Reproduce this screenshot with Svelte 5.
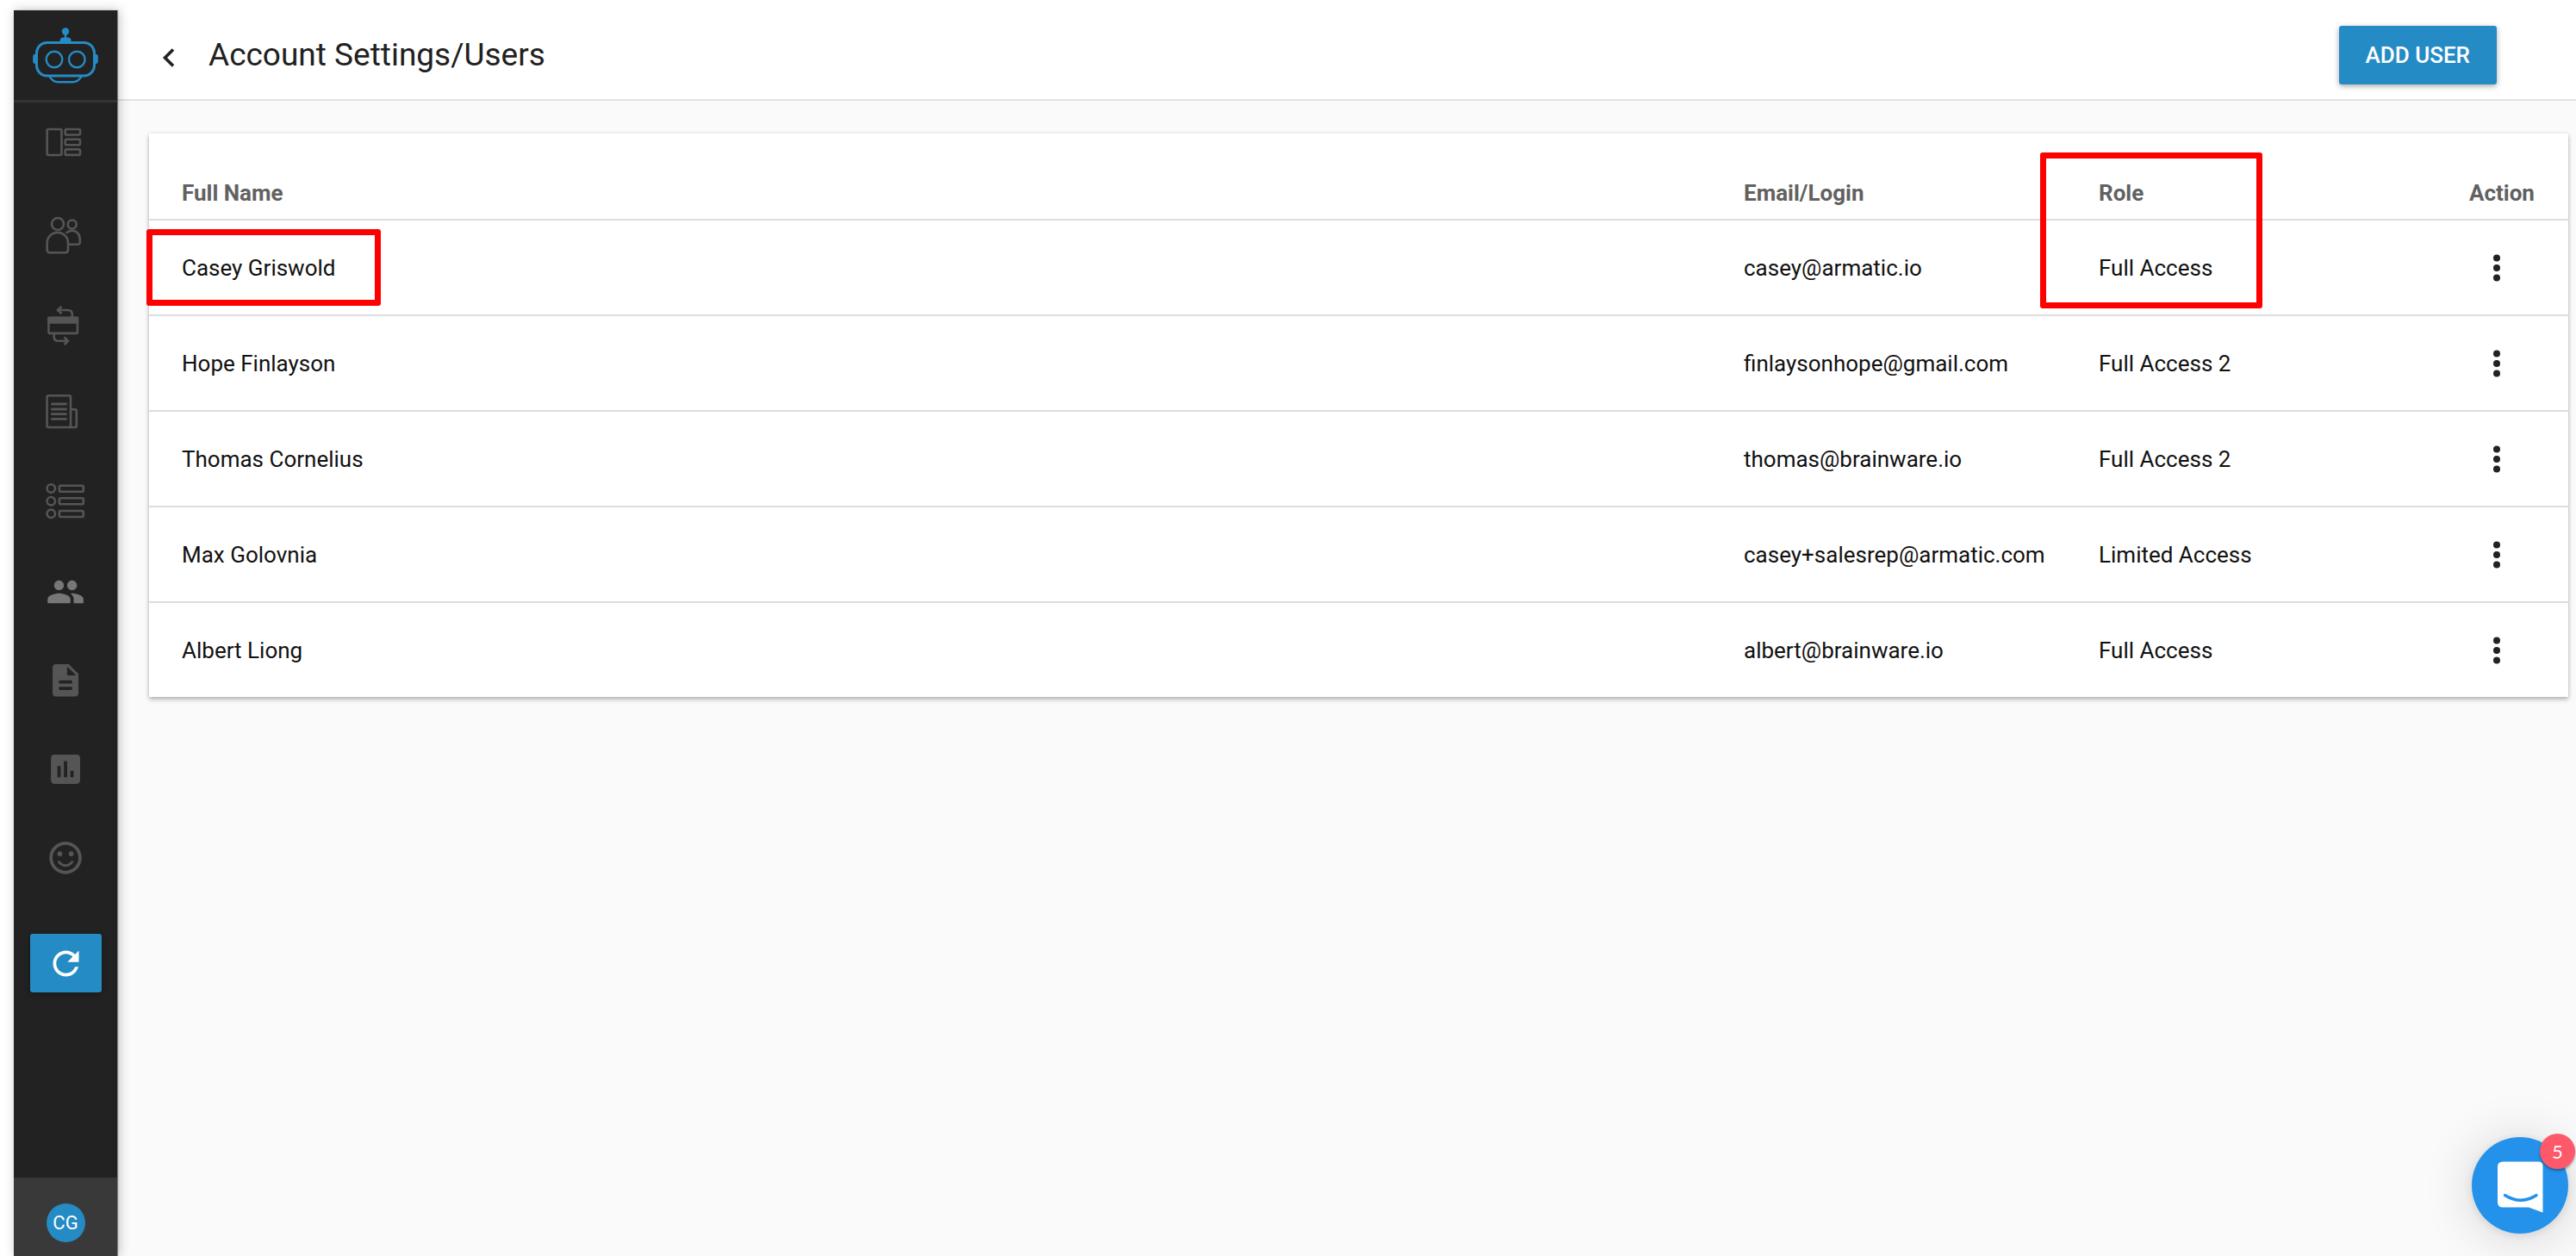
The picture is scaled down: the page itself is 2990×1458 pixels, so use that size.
<script>
  let unread = 5;

  const users = [
    { name: "Casey Griswold", email: "casey@armatic.io", role: "Full Access" },
    { name: "Hope Finlayson", email: "finlaysonhope@gmail.com", role: "Full Access 2" },
    { name: "Thomas Cornelius", email: "thomas@brainware.io", role: "Full Access 2" },
    { name: "Max Golovnia", email: "casey+salesrep@armatic.com", role: "Limited Access" },
    { name: "Albert Liong", email: "albert@brainware.io", role: "Full Access" },
  ];
</script>

<div class="app">
  <aside class="sidebar">
    <a class="logo" href="#home" aria-label="Home">
      <svg width="120" height="104" viewBox="0 0 120 104" fill="none" stroke="#258bc5" stroke-width="3">
        <rect x="26.5" y="37.5" width="67" height="38.5" rx="12" />
        <circle cx="47" cy="57" r="9.3" stroke-width="2.4" />
        <circle cx="73.3" cy="57" r="9.3" stroke-width="2.4" />
        <path d="M41.5 76.5C44 81.5 48 83.2 52 83.2H68C72 83.2 76 81.5 78.5 76.5" stroke-width="2.4" />
        <path d="M60 26v8" stroke-width="2.4" />
        <g fill="#258bc5" stroke="none">
          <circle cx="60" cy="24.5" r="4.2" />
          <path d="M53.6 37v-1.5q0-4 4-4h5q4 0 4 4V37z" />
          <path d="M26 51h-1.5q-2.3 0-2.3 3v5q0 3 2.3 3H26z" />
          <path d="M94 51h1.5q2.3 0 2.3 3v5q0 3-2.3 3H94z" />
        </g>
      </svg>
    </a>

    <nav class="menu">
      <a href="#dashboard" aria-label="Dashboard">
        <svg viewBox="0 0 60 60" class="line">
          <rect x="8.7" y="15" width="16.8" height="30" rx="1.5" />
          <rect x="29.7" y="15" width="17.3" height="6.5" rx="1.5" />
          <rect x="29.7" y="26.7" width="17.3" height="6.5" rx="1.5" />
          <rect x="29.7" y="38.4" width="17.3" height="6.5" rx="1.5" />
        </svg>
      </a>
      <a href="#customers" aria-label="Customers">
        <svg viewBox="0 0 60 60" class="line">
          <circle cx="21" cy="21" r="7" />
          <circle cx="37.7" cy="21.5" r="5" />
          <path d="M8.7 43A12.15 12.15 0 0 1 33 43V51q0 3.3-3.5 3.3H12.200q-3.500 0-3.500-3.300z" />
          <path d="M30.5 31.5Q34 28.7 37.5 28.7C43 28.7 46.800 33 46.800 39V42q0 2.800-3 2.800H33" />
        </svg>
      </a>
      <a href="#payments" aria-label="Payments">
        <svg viewBox="0 0 60 60" class="line">
          <rect x="10.5" y="25.9" width="33.400" height="18" rx="1.5" />
          <path d="M10.5 26h33.4v5.500H10.5z" fill="#555" />
          <path d="M21 17H33q4.7 0 4.7 4.7V25M25.5 12.8L21 17l4.5 4.3" />
          <path d="M16.7 45v3q0 4.7 4.7 4.7H33M28.5 48.4l4.5 4.3-4.5 4.3" />
        </svg>
      </a>
      <a href="#invoices" aria-label="Invoices">
        <svg viewBox="0 0 60 60" class="line">
          <rect x="8.6" y="12.300" width="27.4" height="36.700" rx="1.5" />
          <path d="M36 28.3h5.3q1.5 0 1.5 1.5V47.5q0 1.5-1.5 1.5H34" />
          <path d="M13.3 22h18.4M13.3 28h18.4M13.3 33.7h18.4M13.3 39.4h18.4" stroke-width="2.8" />
        </svg>
      </a>
      <a href="#tasks" aria-label="Tasks">
        <svg viewBox="0 0 60 60" class="line">
          <circle cx="13.3" cy="16" r="4.7" />
          <circle cx="13.3" cy="30.7" r="4.7" />
          <circle cx="13.3" cy="45.3" r="4.7" />
          <rect x="22.9" y="12.7" width="27.9" height="7" rx="1.5" />
          <rect x="22.9" y="27.3" width="27.9" height="7" rx="1.5" />
          <rect x="22.9" y="42" width="27.9" height="7" rx="1.5" />
        </svg>
      </a>
      <a href="#users" aria-label="Users" class="current">
        <svg viewBox="0 0 60 60">
          <path transform="translate(7.4 9.3) scale(1.89)" d="M16 11c1.66 0 2.99-1.34 2.99-3S17.66 5 16 5s-3 1.34-3 3 1.34 3 3 3zm-8 0c1.66 0 2.99-1.34 2.99-3S9.66 5 8 5 5 6.34 5 8s1.34 3 3 3zm0 2c-2.33 0-7 1.17-7 3.5V19h14v-2.5c0-2.33-4.67-3.5-7-3.5zm8 0c-.29 0-.62.02-.97.05 1.16.84 1.97 1.97 1.97 3.45V19h6v-2.5c0-2.33-4.67-3.5-7-3.5z" />
        </svg>
      </a>
      <a href="#documents" aria-label="Documents">
        <svg viewBox="0 0 60 60">
          <path transform="translate(7.5 8.2) scale(1.88)" d="M14 2H6c-1.1 0-1.99.9-1.99 2L4 20c0 1.1.89 2 1.99 2H18c1.1 0 2-.9 2-2V8l-6-6zm2 16H8v-2h8v2zm0-4H8v-2h8v2zm-3-5V3.5L18.5 9H13z" />
        </svg>
      </a>
      <a href="#reports" aria-label="Reports">
        <svg viewBox="0 0 60 60">
          <path transform="translate(7.5 7.4) scale(1.88)" d="M19 3H5c-1.1 0-2 .9-2 2v14c0 1.1.9 2 2 2h14c1.1 0 2-.9 2-2V5c0-1.1-.9-2-2-2zM9 17H7v-7h2v7zm4 0h-2V7h2v10zm4 0h-2v-4h2v4z" />
        </svg>
      </a>
      <a href="#feedback" aria-label="Feedback">
        <svg viewBox="0 0 60 60">
          <g transform="translate(7.5 6.3) scale(1.88)">
            <circle cx="15.5" cy="9.5" r="1.5" />
            <circle cx="8.5" cy="9.5" r="1.5" />
            <path d="M11.99 2C6.47 2 2 6.48 2 12s4.47 10 9.99 10C17.52 22 22 17.52 22 12S17.52 2 11.99 2zM12 20c-4.42 0-8-3.58-8-8s3.58-8 8-8 8 3.58 8 8-3.58 8-8 8zm0-4c-1.48 0-2.75-.81-3.45-2H6.88c.8 2.05 2.79 3.5 5.12 3.5s4.32-1.45 5.12-3.5h-1.67c-.7 1.19-1.97 2-3.45 2z" />
          </g>
        </svg>
      </a>
    </nav>

    <button class="refresh" aria-label="Refresh">
      <svg width="45" height="45" viewBox="0 0 24 24">
        <path d="M17.65 6.35C16.2 4.9 14.21 4 12 4c-4.42 0-7.99 3.58-7.99 8s3.57 8 7.99 8c3.73 0 6.84-2.55 7.73-6h-2.08c-.82 2.33-3.04 4-5.65 4-3.31 0-6-2.69-6-6s2.69-6 6-6c1.66 0 3.14.69 4.22 1.78L13 11h7V4l-2.35 2.35z" />
      </svg>
    </button>

    <div class="account">
      <button class="avatar">CG</button>
    </div>
  </aside>

  <div class="page">
    <header class="topbar">
      <button class="back" aria-label="Back">
        <svg width="24" height="24" viewBox="0 0 24 24" fill="none" stroke="#222" stroke-width="3.6">
          <path d="M19 2.5L9.500 12l9.500 9.500" />
        </svg>
      </button>
      <h1>Account Settings/Users</h1>
      <button class="add-user">ADD USER</button>
    </header>

    <main>
      <table class="users">
        <colgroup>
          <col />
          <col class="col-email" />
          <col class="col-role" />
          <col class="col-action" />
        </colgroup>
        <thead>
          <tr>
            <th>Full Name</th>
            <th>Email/Login</th>
            <th class="marked">Role<span class="mark mark-role"></span></th>
            <th>Action</th>
          </tr>
        </thead>
        <tbody>
          {#each users as user, i}
            <tr>
              <td class:marked={i === 0}>
                {user.name}
                {#if i === 0}<span class="mark mark-name"></span>{/if}
              </td>
              <td>{user.email}</td>
              <td>{user.role}</td>
              <td>
                <button class="more" aria-label="Actions for {user.name}">
                  <svg width="8" height="32" viewBox="0 0 8 32" fill="#222">
                    <circle cx="4" cy="4.6" r="4" />
                    <circle cx="4" cy="16" r="4" />
                    <circle cx="4" cy="27.4" r="4" />
                  </svg>
                </button>
              </td>
            </tr>
          {/each}
        </tbody>
      </table>
    </main>
  </div>

  <button class="chat" aria-label="Open chat">
    <svg width="112" height="112" viewBox="0 0 112 112">
      <path d="M36 28.5H77.5Q82.5 28.5 82.5 33.5V87.5L66 81.5H36Q30 81.5 30 75.5V34.5Q30 28.5 36 28.5z" fill="#fff" />
      <path d="M38.5 67.5Q57 79 75 67.5" fill="none" stroke="#2491eb" stroke-width="3.4" stroke-linecap="round" />
    </svg>
    <span class="badge">{unread}</span>
  </button>
</div>

<style>
  :global(body) {
    background: #fff;
    color: #212121;
    font-family: Roboto, "Liberation Sans", sans-serif;
  }

  .app {
    box-sizing: border-box;
    display: flex;
    min-height: 100vh;
    padding: 12px 0 0 16px;
  }

  button {
    border: none;
    padding: 0;
    background: none;
    font-family: inherit;
    cursor: pointer;
  }

  svg {
    display: block;
  }

  .sidebar {
    z-index: 1;
    display: flex;
    flex: none;
    flex-direction: column;
    align-items: center;
    width: 120px;
    background: #222;
    box-shadow: 1px 0 1px rgba(0, 0, 0, 0.4), 2px 0 12px rgba(0, 0, 0, 0.25);
  }

  .logo {
    border-bottom: 3px solid #333;
  }

  .menu {
    display: flex;
    flex-direction: column;
    gap: 44px;
    padding-top: 16px;
  }

  .menu svg {
    width: 60px;
    height: 60px;
    fill: #555;
  }

  .menu .current svg {
    fill: #777;
  }

  .menu .line {
    fill: none;
    stroke: #555;
    stroke-width: 2.6;
  }

  .refresh {
    display: flex;
    align-items: center;
    justify-content: center;
    width: 83px;
    height: 68px;
    margin-top: 57px;
    border-radius: 3px;
    background: #258bc5;
    fill: #fff;
    box-shadow: 0 2px 6px rgba(0, 0, 0, 0.3);
  }

  .account {
    display: flex;
    justify-content: center;
    width: 100%;
    margin-top: auto;
    padding: 30px 0 16px;
    background: #393939;
  }

  .avatar {
    width: 45px;
    height: 45px;
    border-radius: 50%;
    background: #258bc5;
    color: #fff;
    font-size: 22px;
  }

  .page {
    flex: 1;
    min-width: 0;
    background: #fafafa;
  }

  .topbar {
    display: flex;
    align-items: center;
    height: 103px;
    padding: 0 92px 0 46px;
    border-bottom: 2px solid #e3e3e3;
    background: #fff;
  }

  .back {
    padding-top: 6px;
  }

  h1 {
    flex: 1;
    margin: 0 0 0 36px;
    font-size: 37px;
    font-weight: 400;
  }

  .add-user {
    height: 68px;
    padding: 0 31px;
    border-radius: 3px;
    background: #258bc5;
    color: #fff;
    font-size: 26px;
    font-weight: 500;
    box-shadow: 0 2px 6px rgba(0, 0, 0, 0.35);
  }

  main {
    padding: 38px 9px 38px 37px;
  }

  .users {
    width: 100%;
    table-layout: fixed;
    border-collapse: separate;
    border-spacing: 0;
    background: #fff;
    font-size: 26px;
    line-height: 30px;
    text-align: left;
    box-shadow: 0 3px 5px rgba(0, 0, 0, 0.25), 0 0 4px rgba(0, 0, 0, 0.1);
  }

  .col-email {
    width: 412px;
  }

  .col-role {
    width: 430px;
  }

  .col-action {
    width: 115px;
  }

  th,
  td {
    box-sizing: border-box;
    padding: 0;
    border-bottom: 2px solid #ddd;
  }

  th:first-child,
  td:first-child {
    padding-left: 38px;
  }

  th {
    height: 101px;
    padding-top: 38px;
    color: #616161;
    font-weight: 700;
  }

  td {
    height: 111px;
    color: #111;
  }

  tbody tr:last-child td {
    height: 109px;
    border-bottom: none;
  }

  .more {
    display: flex;
    justify-content: center;
    width: 64px;
  }

  .marked {
    position: relative;
  }

  /* red outlines drawn over the first user and the role column */
  .mark {
    position: absolute;
    box-sizing: border-box;
    border: 7px solid #f00;
    border-radius: 3px;
    pointer-events: none;
  }

  .mark-name {
    top: 10px;
    left: -3px;
    width: 272px;
    height: 89px;
  }

  .mark-role {
    z-index: 1;
    top: 22px;
    left: -68px;
    width: 258px;
    height: 181px;
  }

  .chat {
    position: fixed;
    right: 9px;
    bottom: 26px;
    width: 112px;
    height: 112px;
    border-radius: 50%;
    background: #2491eb;
    box-shadow: 0 2px 12px rgba(0, 0, 0, 0.1), 0 4px 60px rgba(0, 0, 0, 0.16);
  }

  .badge {
    position: absolute;
    top: -4px;
    right: -8px;
    width: 41px;
    height: 41px;
    border-radius: 50%;
    background: #fe586b;
    color: #fff;
    font-family: Lato, sans-serif;
    font-size: 22px;
    line-height: 41px;
    text-align: center;
    box-shadow: 0 2px 3px rgba(0, 0, 0, 0.35);
  }
</style>
